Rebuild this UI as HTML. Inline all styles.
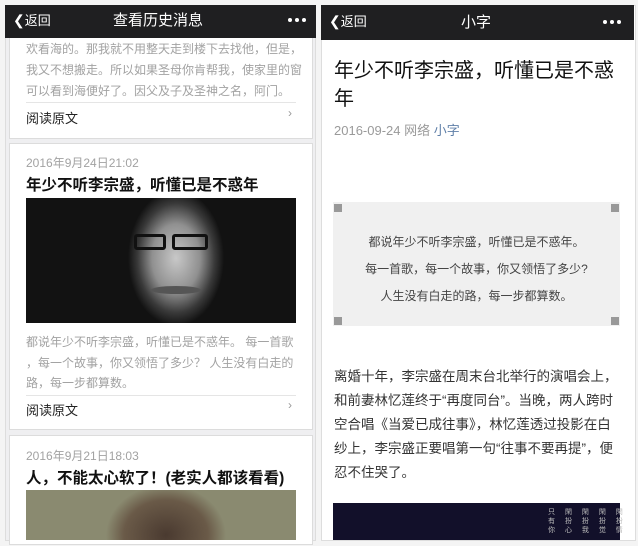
<!DOCTYPE html>
<html><head><meta charset="utf-8"><style>
*{margin:0;padding:0;box-sizing:border-box}
body{width:638px;height:546px;background:#f4f4f4;position:relative;overflow:hidden;font-family:"Liberation Sans","Noto Sans CJK SC",sans-serif}
.abs{position:absolute}
.hdr{background:#1f1f21;color:#fff}
.t{position:absolute;white-space:nowrap}
.card{position:absolute;background:#fff;border:1px solid #dcdcdc}
.g{color:#a2a2a2;font-size:12px}
.dots{position:absolute;width:18px;height:4px}
.dots i{position:absolute;top:0;width:4px;height:4px;border-radius:50%;background:#fff}
</style></head><body>
<!-- left panel -->
<div class="abs" style="left:5px;top:5px;width:311px;height:536px;background:#efeff1;border:1px solid #ddd"></div>
<div class="card" style="left:9px;top:36px;width:304px;height:103px"></div>
<div class="t g" style="left:26px;top:39px;line-height:21px">欢看海的。那我就不用整天走到楼下去找他，但是，<br>我又不想搬走。所以如果圣母你肯帮我，使家里的窗<br>可以看到海便好了。因父及子及圣神之名，阿门。</div>
<div class="abs" style="left:26px;top:102px;width:270px;height:1px;background:#e5e5e5"></div>
<div class="t" style="left:26px;top:108px;font-size:13px;color:#222">阅读原文</div>
<div class="t" style="left:288px;top:106px;font-size:12px;color:#999">›</div>

<div class="card" style="left:9px;top:143px;width:304px;height:287px"></div>
<div class="t g" style="left:26px;top:154px">2016年9月24日21:02</div>
<div class="t" style="left:26px;top:173px;font-size:15.5px;font-weight:bold;color:#111">年少不听李宗盛，听懂已是不惑年</div>
<div class="abs" style="left:26px;top:198px;width:270px;height:125px;background:radial-gradient(ellipse 48px 68px at 150px 60px,#c8c8c8,#909090 50%,#3a3a3a 80%,#121212 100%),#121212;overflow:hidden">
<div class="abs" style="left:108px;top:36px;width:32px;height:16px;border:3px solid #111;border-radius:3px"></div>
<div class="abs" style="left:146px;top:36px;width:36px;height:16px;border:3px solid #111;border-radius:3px"></div>
<div class="abs" style="left:125px;top:88px;width:50px;height:8px;border-radius:50%;background:#555"></div>
</div>
<div class="t g" style="left:26px;top:332px;line-height:20.5px">都说年少不听李宗盛，听懂已是不惑年。 每一首歌<br>，每一个故事，你又领悟了多少？ 人生没有白走的<br>路，每一步都算数。</div>
<div class="abs" style="left:26px;top:395px;width:270px;height:1px;background:#e5e5e5"></div>
<div class="t" style="left:26px;top:400px;font-size:13px;color:#222">阅读原文</div>
<div class="t" style="left:288px;top:398px;font-size:12px;color:#999">›</div>

<div class="card" style="left:9px;top:435px;width:304px;height:110px"></div>
<div class="t g" style="left:26px;top:447px">2016年9月21日18:03</div>
<div class="t" style="left:26px;top:466px;font-size:15.5px;font-weight:bold;color:#111">人，不能太心软了！(老实人都该看看)</div>
<div class="abs" style="left:26px;top:490px;width:270px;height:50px;background:radial-gradient(ellipse 60px 50px at 140px 45px,#4a3a30,#6a5a48 70%,#8a8a70 100%),#8a8a70"></div>

<div class="abs hdr" style="left:5px;top:5px;width:311px;height:33px"></div>
<div class="t" style="left:13px;top:10px;color:#fff;font-size:14px">&#10094;<span style="font-size:13px">返回</span></div>
<div class="t" style="left:113px;top:9px;color:#fff;font-size:15px">查看历史消息</div>
<div class="dots" style="left:288px;top:18px"><i style="left:0"></i><i style="left:7px"></i><i style="left:14px"></i></div>

<!-- right panel -->
<div class="abs" style="left:321px;top:5px;width:315px;height:536px;background:#fff;border:1px solid #ddd"></div>
<div class="abs hdr" style="left:321px;top:5px;width:313px;height:35px"></div>
<div class="t" style="left:329px;top:11px;color:#fff;font-size:14px">&#10094;<span style="font-size:13px">返回</span></div>
<div class="t" style="left:461px;top:11px;color:#fff;font-size:15px">小字</div>
<div class="dots" style="left:603px;top:20px"><i style="left:0"></i><i style="left:7px"></i><i style="left:14px"></i></div>
<div class="t" style="left:334px;top:57px;font-size:20px;line-height:28px;color:#111">年少不听李宗盛，听懂已是不惑<br>年</div>
<div class="t" style="left:334px;top:120px;font-size:13px;color:#9a9a9a">2016-09-24 网络 <span style="color:#5f7fa8">小字</span></div>
<div class="abs" style="left:333px;top:202px;width:287px;height:124px;background:#f0f0f0"></div>
<div class="abs" style="left:334px;top:204px;width:8px;height:8px;background:#999"></div>
<div class="abs" style="left:611px;top:204px;width:8px;height:8px;background:#999"></div>
<div class="abs" style="left:334px;top:317px;width:8px;height:8px;background:#999"></div>
<div class="abs" style="left:611px;top:317px;width:8px;height:8px;background:#999"></div>
<div class="t" style="left:333px;width:287px;text-align:center;top:229px;font-size:12px;line-height:27px;color:#444">都说年少不听李宗盛，听懂已是不惑年。<br>每一首歌，每一个故事，你又领悟了多少?<br>人生没有白走的路，每一步都算数。</div>
<div class="t" style="left:334px;top:365px;font-size:13.5px;line-height:24px;color:#333">离婚十年，李宗盛在周末台北举行的演唱会上，<br>和前妻林忆莲终于“再度同台”。当晚，两人跨时<br>空合唱《当爱已成往事》，林忆莲透过投影在白<br>纱上，李宗盛正要唱第一句“往事不要再提”，便<br>忍不住哭了。</div>
<div class="abs" style="left:333px;top:503px;width:287px;height:37px;background:#12102a"></div>
<div class="t" style="left:548px;top:508px;font-size:7px;line-height:9px;color:#bbb;letter-spacing:4px">只 閑 閑 閑 閑<br>有 扮 扮 扮 扮<br>你 心 我 觉 情</div>
</body></html>
